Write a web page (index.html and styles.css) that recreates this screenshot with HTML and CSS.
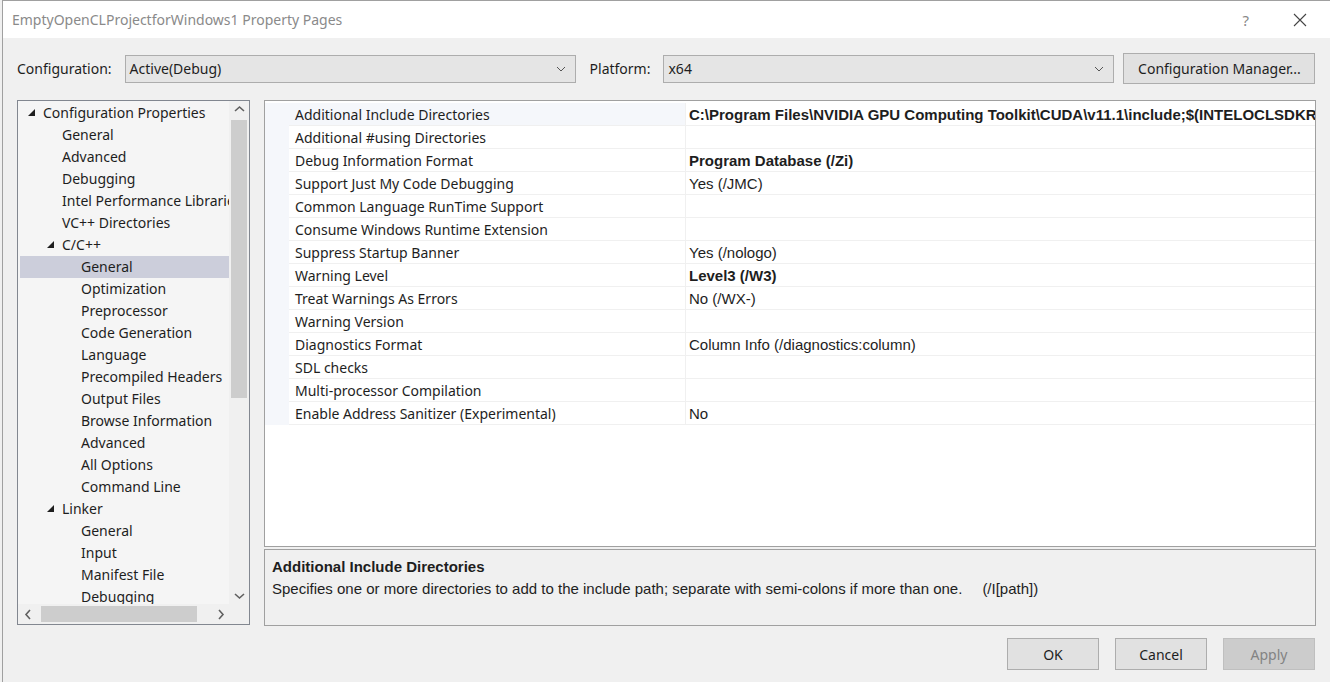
FILE: index.html
```html
<!DOCTYPE html>
<html>
<head>
<meta charset="utf-8">
<link rel="stylesheet" href="styles.css">
</head>
<body>
<div class="dialog">
  <div class="titlebar">
    <span class="title">EmptyOpenCLProjectforWindows1 Property Pages</span>
    <span class="tb-btns">
      <span class="help">?</span>
      <svg class="close" width="14" height="14" viewBox="0 0 14 14"><path d="M1 1L13 13M13 1L1 13" stroke="#444" stroke-width="1.1" fill="none"/></svg>
    </span>
  </div>
  <div class="content">
    <div class="configrow">
      <span class="lbl">Configuration:</span>
      <div class="combo combo-config"><span>Active(Debug)</span><svg width="10" height="6" viewBox="0 0 10 6"><path d="M1 1L5 5L9 1" stroke="#555" fill="none"/></svg></div>
      <span class="lbl lbl-plat">Platform:</span>
      <div class="combo combo-plat"><span>x64</span><svg width="10" height="6" viewBox="0 0 10 6"><path d="M1 1L5 5L9 1" stroke="#555" fill="none"/></svg></div>
      <button class="btn btn-cm">Configuration Manager...</button>
    </div>
    <div class="main">
      <div class="tree">
        <div class="tree-body">
          <div class="tree-items">
            <div class="ti l0"><span class="tri"></span>Configuration Properties</div>
            <div class="ti l1">General</div>
            <div class="ti l1">Advanced</div>
            <div class="ti l1">Debugging</div>
            <div class="ti l1">Intel Performance Libraries</div>
            <div class="ti l1">VC++ Directories</div>
            <div class="ti l1 exp"><span class="tri"></span>C/C++</div>
            <div class="ti l2 sel">General</div>
            <div class="ti l2">Optimization</div>
            <div class="ti l2">Preprocessor</div>
            <div class="ti l2">Code Generation</div>
            <div class="ti l2">Language</div>
            <div class="ti l2">Precompiled Headers</div>
            <div class="ti l2">Output Files</div>
            <div class="ti l2">Browse Information</div>
            <div class="ti l2">Advanced</div>
            <div class="ti l2">All Options</div>
            <div class="ti l2">Command Line</div>
            <div class="ti l1 exp"><span class="tri"></span>Linker</div>
            <div class="ti l2">General</div>
            <div class="ti l2">Input</div>
            <div class="ti l2">Manifest File</div>
            <div class="ti l2">Debugging</div>
          </div>
          <div class="vscroll">
            <svg class="arr" width="17" height="17" viewBox="0 0 17 17"><path d="M4 10L8.5 6L13 10" stroke="#606060" stroke-width="1.6" fill="none"/></svg>
            <div class="vtrack"><div class="vthumb"></div></div>
            <svg class="arr" width="17" height="17" viewBox="0 0 17 17"><path d="M4 7L8.5 11L13 7" stroke="#606060" stroke-width="1.6" fill="none"/></svg>
          </div>
        </div>
        <div class="hscroll">
          <svg class="arr" width="17" height="17" viewBox="0 0 17 17"><path d="M10 4L6 8.5L10 13" stroke="#606060" stroke-width="1.6" fill="none"/></svg>
          <div class="htrack"><div class="hthumb"></div></div>
          <svg class="arr" width="17" height="17" viewBox="0 0 17 17"><path d="M7 4L11 8.5L7 13" stroke="#606060" stroke-width="1.6" fill="none"/></svg>
          <div class="corner"></div>
        </div>
      </div>
      <div class="right">
        <div class="grid">
          <div class="row cur"><div class="gut"></div><div class="nm">Additional Include Directories</div><div class="val b">C:\Program Files\NVIDIA GPU Computing Toolkit\CUDA\v11.1\include;$(INTELOCLSDKROOT)\include;%(AdditionalIncludeDirectories)</div></div>
          <div class="row"><div class="gut"></div><div class="nm">Additional #using Directories</div><div class="val"></div></div>
          <div class="row"><div class="gut"></div><div class="nm">Debug Information Format</div><div class="val b">Program Database (/Zi)</div></div>
          <div class="row"><div class="gut"></div><div class="nm">Support Just My Code Debugging</div><div class="val">Yes (/JMC)</div></div>
          <div class="row"><div class="gut"></div><div class="nm">Common Language RunTime Support</div><div class="val"></div></div>
          <div class="row"><div class="gut"></div><div class="nm">Consume Windows Runtime Extension</div><div class="val"></div></div>
          <div class="row"><div class="gut"></div><div class="nm">Suppress Startup Banner</div><div class="val">Yes (/nologo)</div></div>
          <div class="row"><div class="gut"></div><div class="nm">Warning Level</div><div class="val b">Level3 (/W3)</div></div>
          <div class="row"><div class="gut"></div><div class="nm">Treat Warnings As Errors</div><div class="val">No (/WX-)</div></div>
          <div class="row"><div class="gut"></div><div class="nm">Warning Version</div><div class="val"></div></div>
          <div class="row"><div class="gut"></div><div class="nm">Diagnostics Format</div><div class="val">Column Info (/diagnostics:column)</div></div>
          <div class="row"><div class="gut"></div><div class="nm">SDL checks</div><div class="val"></div></div>
          <div class="row"><div class="gut"></div><div class="nm">Multi-processor Compilation</div><div class="val"></div></div>
          <div class="row"><div class="gut"></div><div class="nm">Enable Address Sanitizer (Experimental)</div><div class="val">No</div></div>
        </div>
        <div class="desc">
          <div class="desc-title">Additional Include Directories</div>
          <div class="desc-text">Specifies one or more directories to add to the include path; separate with semi-colons if more than one.<span class="sw">(/I[path])</span></div>
        </div>
      </div>
    </div>
    <div class="buttons">
      <button class="btn btn-d">OK</button>
      <button class="btn btn-d">Cancel</button>
      <button class="btn btn-d dis">Apply</button>
    </div>
  </div>
</div>
</body>
</html>
```
FILE: styles.css
```css
* { box-sizing: border-box; }
html, body { margin: 0; padding: 0; }
body {
  width: 1330px; height: 682px; overflow: hidden;
  background: #f0f0f0;
  font-family: "Noto Sans", "Open Sans", sans-serif;
  font-size: 14px; color: #1e1e1e;
}
.dialog {
  height: 682px;
  margin-left: 2px;
  border-left: 1px solid #a0a0a0;
  border-top: 1px solid #a0a0a0;
  background: #f0f0f0;
  display: flex; flex-direction: column;
}
.titlebar {
  height: 37px; background: #fff;
  display: flex; align-items: center; justify-content: space-between;
  padding-left: 9px; padding-right: 23px;
}
.title { color: #8a8a8a; font-size: 14px; }
.tb-btns { display: flex; align-items: center; gap: 44px; }
.help { color: #888; font-size: 15px; }
.close { display: block; }
.content { padding: 15px 14px 0 14px; display: flex; flex-direction: column; }
.configrow { display: flex; align-items: center; height: 31px; }
.lbl { margin-right: 13px; }
.lbl-plat { margin-left: 14px; margin-right: 13px; }
.combo {
  height: 28px; border: 1px solid #adadad; background: #e5e5e5;
  display: flex; align-items: center; justify-content: space-between;
  padding: 0 9px 0 4px;
}
.combo svg { display: block; }
.combo-config { width: 451px; }
.combo-plat { width: 451px; margin-right: 9px; }
.btn {
  font: inherit; color: #1e1e1e;
  background: #e1e1e1; border: 1px solid #adadad;
  padding: 0;
}
.btn-cm { width: 192px; height: 31px; }
.main { display: flex; margin-top: 16px; gap: 14px; }
.tree {
  width: 233px; height: 525px; border: 1px solid #828790; background: #f5f5f5;
  display: flex; flex-direction: column; flex: none;
}
.tree-body { flex: 1; display: flex; min-height: 0; }
.tree-items { flex: 1; overflow: hidden; padding-top: 1px; padding-left: 2px; min-width: 0; }
.ti { height: 22px; line-height: 22px; white-space: nowrap; position: relative; }
.l0 { padding-left: 23px; }
.l1 { padding-left: 42px; }
.l2 { padding-left: 61px; }
.sel { background: #cccedb; }
.tri {
  position: absolute; top: 7px; width: 0; height: 0;
  border-left: 7px solid transparent; border-bottom: 7px solid #1e1e1e;
}
.l0 .tri { left: 8px; }
.l1 .tri { left: 27px; }
.vscroll { width: 20px; display: flex; flex-direction: column; background: #f0f0f0; flex: none; }
.vscroll .arr { margin-left: 2px; }
.vtrack { flex: 1; padding: 2px 2px 0 2px; }
.vthumb { height: 278px; background: #cdcdcd; }
.hscroll { height: 20px; display: flex; align-items: center; background: #f0f0f0; }
.hscroll .arr { flex: none; margin-left: 2px; }
.htrack { flex: 1; height: 20px; padding: 2px 2px; }
.hthumb { width: 156px; height: 16px; background: #cdcdcd; margin-left: 2px; }
.corner { width: 20px; height: 20px; background: #f0f0f0; }
.right { flex: 1; display: flex; flex-direction: column; min-width: 0; }
.grid {
  height: 447px; border: 1px solid #a0a0a0; background: #fff;
  padding-top: 2px; overflow: hidden;
}
.row { display: flex; height: 23px; }
.gut { width: 24px; background: #f5f7fb; flex: none; }
.nm {
  width: 397px; flex: none; padding-left: 6px; line-height: 23px;
  border-bottom: 1px solid #f0f0f0; border-right: 1px solid #f0f0f0; white-space: nowrap;
}
.cur .nm { background: #f5f7fb; }
.val {
  flex: 1; min-width: 0; padding-left: 3px; line-height: 23px; border-bottom: 1px solid #f0f0f0;
  white-space: nowrap; overflow: hidden;
  font-family: "Liberation Sans Narrow", "Liberation Sans", sans-serif; font-size: 15px;
}
.b { font-weight: bold; }
.desc {
  margin-top: 2px; height: 77px; border: 1px solid #a0a0a0; background: #f0f0f0;
  padding: 6px 7px;
  font-family: "Liberation Sans Narrow", "Liberation Sans", sans-serif; font-size: 15px;
}
.desc-title { font-weight: bold; height: 22px; line-height: 22px; }
.desc-text { height: 22px; line-height: 22px; white-space: nowrap; }
.sw { margin-left: 20px; }
.buttons { display: flex; justify-content: flex-end; gap: 16px; margin-top: 12px; padding-right: 1px; }
.btn-d { width: 92px; height: 32px; }
.dis { background: #cccccc; color: #838383; border-color: #bfbfbf; }
```
